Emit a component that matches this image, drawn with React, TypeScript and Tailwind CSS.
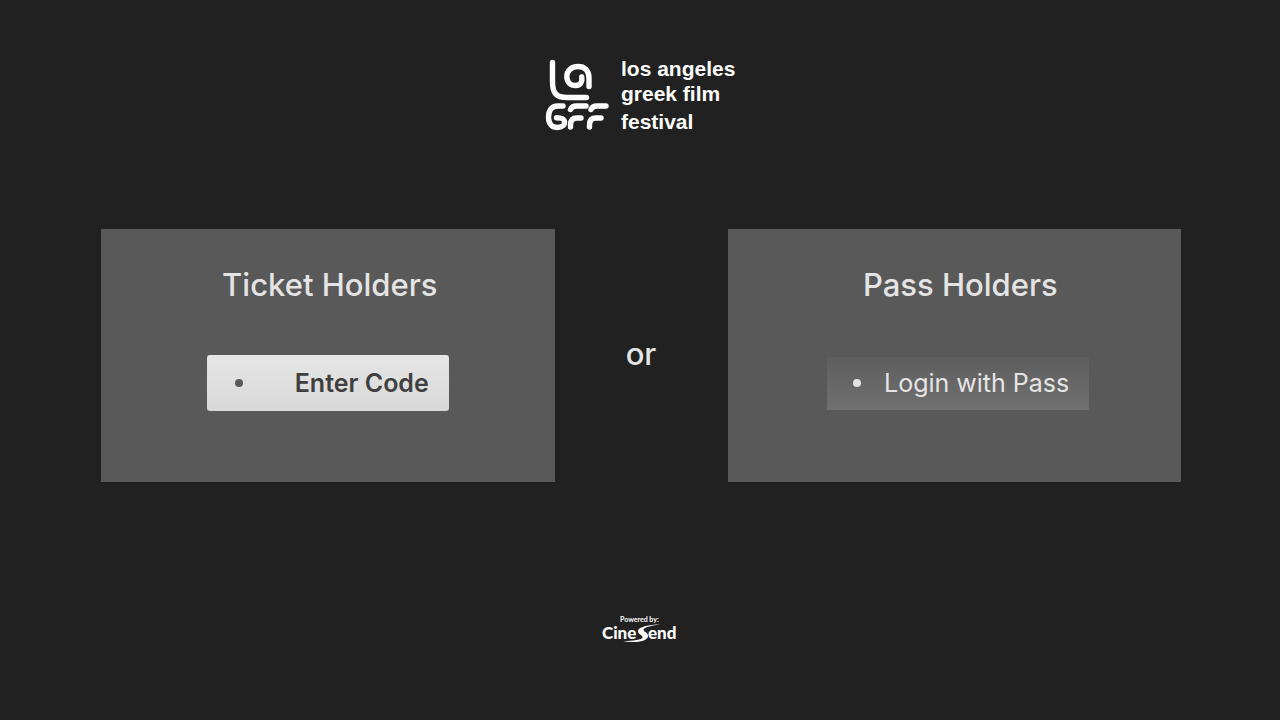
import React from "react";
import clsx from "clsx";

type HolderCardProps = {
    title: string;
    action: string;
    focused?: boolean;
};

function FestivalLogo() {
    return (
        <svg viewBox="0 0 196 76" className="w-[196px] h-[76px]" role="img" aria-label="los angeles greek film festival">
            <g fill="none" stroke="#fff" strokeWidth="5.400" strokeLinecap="round" strokeLinejoin="round">
                {/* L */}
                <path d="M8.500 6.500V26C8.500 37 12 41.500 23 41.500H42.500" />
                {/* A spiral */}
                <path d="M45 30.500V22C45 14 40 10.500 34 10.500C27 10.500 22.800 15 22.800 20.500C22.800 26 26.500 29.500 31.500 29.500C36.500 29.500 38.500 26 37.800 21" />
                {/* G */}
                <path d="M19 50H14C7 50 4.500 55 4.500 61C4.500 67.500 7.500 71.500 13 71.500C18.500 71.500 21 69 20.500 65.500C20 62.300 17 61.800 12.500 61.800" />
                {/* F F */}
                <path d="M26.500 53.500C27.500 51 29.500 50 32.500 50H42" />
                <path d="M26.500 71V69C26.500 64 29 62 33 62H37" />
                <path d="M47 53.500C48 51 50 50 53 50H62" />
                <path d="M45.500 71V69C45.500 64 48 62 52 62H57" />
            </g>
            <g fill="#fff" className="font-['Liberation_Sans',Arial,sans-serif] text-[21px] font-bold">
                <text x="77" y="20">los angeles</text>
                <text x="77" y="45">greek film</text>
                <text x="77" y="73">festival</text>
            </g>
        </svg>
    );
}

function CineSendLogo() {
    return (
        <svg viewBox="0 0 80 30" className="w-20 h-[30px]" role="img" aria-label="Powered by: CineSend">
            <g fill="#fff">
                <text x="20" y="7" className="font-['Lato',sans-serif] text-[7px] font-bold">Powered by:</text>
                <text x="2" y="24" className="font-['Lato',sans-serif] text-[17px] font-black">Cine</text>
                <text x="48" y="24" className="font-['Lato',sans-serif] text-[17px] font-black">end</text>
            </g>
            {/* swoosh S */}
            <path d="M60 9.500C49 9.500 38 12 38 16C38 19.500 42.500 20 42.500 22.300C42.500 25 33 25.800 23 26.300C34 28 47.800 27 48 21C48.200 17.500 43.500 17 43.500 14.800C43.500 12.500 50 10.800 60 9.500Z" fill="#fff" />
        </svg>
    );
}

function HolderCard({ title, action, focused = false }: HolderCardProps) {
    return (
        <section className={clsx("flex flex-col items-center bg-[#595959] h-[253px] pt-9", !focused && "pl-2")}>
            <h2 className="pl-1 text-[31px] leading-10 font-medium text-[#e4e4e4]">{title}</h2>
            <div className="flex items-center h-14 mt-[50px]">
                <button
                    type="button"
                    className={clsx(
                        "flex items-center justify-between whitespace-nowrap text-[25px] leading-8",
                        focused
                            ? "w-[242px] h-14 pl-7 pr-5 rounded-[3px] bg-linear-to-b from-[#e6e6e6] to-[#d8d8d8] font-semibold text-[#404040]"
                            : "w-[262px] h-[53px] pl-[26px] pr-5 rounded-[1px] bg-linear-to-b from-[#5e5e5e] to-[#707070] text-[#e4e4e4]"
                    )}
                >
                    <span className={clsx("size-2 rounded-full", focused ? "bg-[#595959]" : "bg-[#e4e4e4]")} />
                    {action}
                </button>
            </div>
        </section>
    );
}

export default function App() {
    return (
        <div className="flex flex-col items-center min-h-screen bg-[#212121] font-['Inter',sans-serif]">
            <header className="pt-14 pl-1">
                <FestivalLogo />
            </header>
            <main className="grid grid-cols-[1fr_173px_1fr] items-center w-full pl-[101px] pr-[99px] mt-[97px]">
                <HolderCard title="Ticket Holders" action="Enter Code" focused />
                <p className="pb-1 text-center text-[31px] leading-10 font-medium text-[#e4e4e4]">or</p>
                <HolderCard title="Pass Holders" action="Login with Pass" />
            </main>
            <footer className="mt-auto pb-[75px]">
                <CineSendLogo />
            </footer>
        </div>
    );
}
